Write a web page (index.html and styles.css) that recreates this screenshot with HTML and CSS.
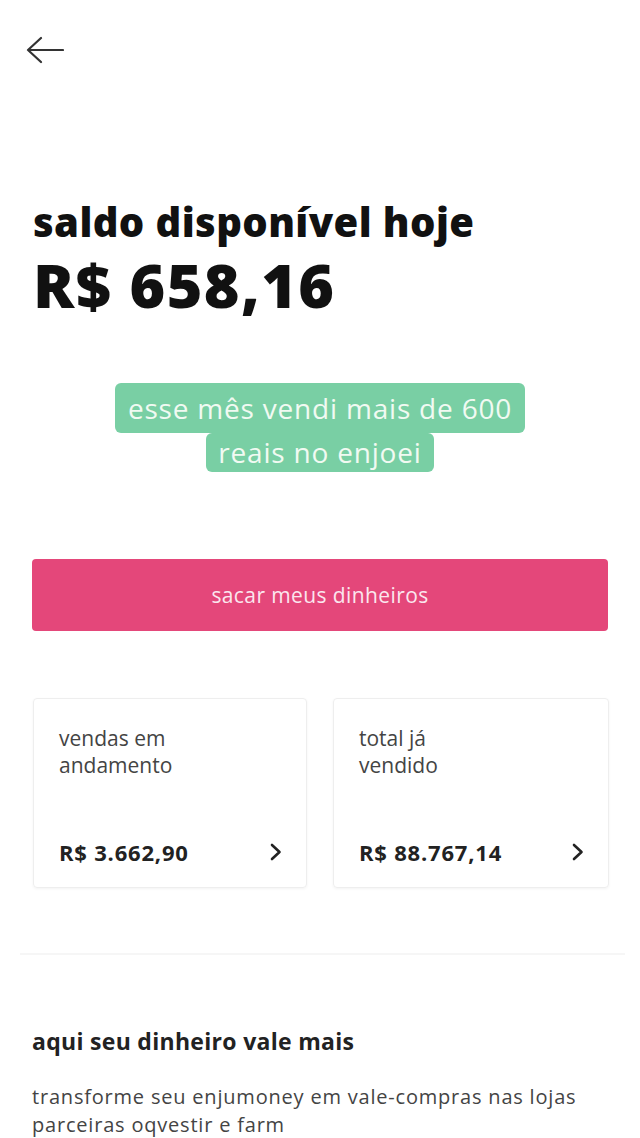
FILE: index.html
```html
<!DOCTYPE html>
<html lang="pt-BR">
<head>
    <meta charset="UTF-8">
    <meta name="viewport" content="width=device-width, initial-scale=1.0">
    <title>saldo disponível</title>
    <link rel="stylesheet" href="styles.css">
</head>
<body>
    <div class="page">
        <div class="topbar">
            <svg class="back" width="38" height="28" viewBox="0 0 38 28">
                <path d="M37 14H2M15 2L2 14l13 12" fill="none" stroke="#333" stroke-width="2.2" stroke-linecap="round" stroke-linejoin="round"/>
            </svg>
        </div>

        <div class="balance">
            <h1>saldo disponível hoje</h1>
            <div class="amount">R$ 658,16</div>
        </div>

        <div class="caption">
            <div class="caption-line first">esse mês vendi mais de 600</div>
            <div class="caption-line">reais no enjoei</div>
        </div>

        <button class="withdraw" type="button">sacar meus dinheiros</button>

        <div class="cards">
            <div class="card">
                <div class="card-title">vendas em<br>andamento</div>
                <div class="card-row">
                    <span class="card-value">R$ 3.662,90</span>
                    <svg class="chevron" width="12" height="18" viewBox="0 0 12 18">
                        <path d="M2 2l7.5 7-7.5 7" fill="none" stroke="#222" stroke-width="2.6" stroke-linecap="round" stroke-linejoin="round"/>
                    </svg>
                </div>
            </div>
            <div class="card">
                <div class="card-title">total já<br>vendido</div>
                <div class="card-row">
                    <span class="card-value">R$ 88.767,14</span>
                    <svg class="chevron" width="12" height="18" viewBox="0 0 12 18">
                        <path d="M2 2l7.5 7-7.5 7" fill="none" stroke="#222" stroke-width="2.6" stroke-linecap="round" stroke-linejoin="round"/>
                    </svg>
                </div>
            </div>
        </div>

        <div class="divider"></div>

        <div class="promo">
            <h2>aqui seu dinheiro vale mais</h2>
            <p>transforme seu enjumoney em vale-compras nas lojas parceiras oqvestir e farm</p>
        </div>
    </div>
</body>
</html>
```

FILE: styles.css
```css
body {
    margin: 0;
    background: #fff;
    font-family: 'Open Sans', 'Lato', sans-serif;
    color: #222;
}
.page {
    width: 640px;
    height: 1138px;
    overflow: hidden;
}
.topbar {
    padding: 36px 0 0 26px;
    height: 30px;
}
.back {
    display: block;
}
.balance {
    padding: 0 33px;
    margin-top: 133px;
}
h1 {
    margin: 0;
    font-size: 40px;
    font-weight: 800;
    line-height: 46px;
    letter-spacing: 0.4px;
    color: #111;
}
.amount {
    margin-top: 8px;
    font-size: 61px;
    font-weight: 800;
    line-height: 64px;
    letter-spacing: 1.4px;
    color: #111;
}
.caption {
    margin-top: 66px;
    text-align: center;
}
.caption-line {
    width: fit-content;
    margin: 0 auto;
    background: #79cfa4;
    color: #f1faf2;
    font-size: 28px;
    line-height: 35px;
    letter-spacing: 0.8px;
    padding: 2px 12px;
    border-radius: 6px;
}
.caption-line.first {
    line-height: 40px;
    padding: 5px 13px;
}
.withdraw {
    display: block;
    width: 576px;
    height: 72px;
    margin: 87px 0 0 32px;
    background: #e4477a;
    color: #fbe6ee;
    border: none;
    border-radius: 4px;
    font-family: 'Open Sans', sans-serif;
    font-size: 21px;
    letter-spacing: 0.4px;
}
.cards {
    display: grid;
    grid-template-columns: 274px 276px;
    gap: 26px;
    padding: 0 32px 0 33px;
    margin-top: 67px;
}
.card {
    height: 190px;
    box-sizing: border-box;
    border: 1px solid #eee;
    border-radius: 4px;
    box-shadow: 0 1px 3px rgba(0, 0, 0, 0.05);
    padding: 26px 24px 20px 25px;
    display: flex;
    flex-direction: column;
    justify-content: space-between;
}
.card-title {
    font-size: 21px;
    line-height: 27px;
    color: #444;
}
.card-row {
    display: flex;
    justify-content: space-between;
    align-items: center;
    height: 30px;
}
.card-value {
    font-size: 22px;
    font-weight: 700;
    letter-spacing: 0.8px;
    color: #222;
}
.divider {
    height: 2px;
    background: #f6f6f6;
    margin: 65px 15px 0 20px;
}
.promo {
    padding: 0 32px;
    margin-top: 71px;
}
h2 {
    margin: 0;
    font-size: 23px;
    font-weight: 700;
    line-height: 30px;
    letter-spacing: 0.3px;
    color: #222;
}
.promo p {
    margin: 27px 0 0;
    font-size: 20px;
    line-height: 28px;
    letter-spacing: 0.8px;
    color: #444;
}
```
